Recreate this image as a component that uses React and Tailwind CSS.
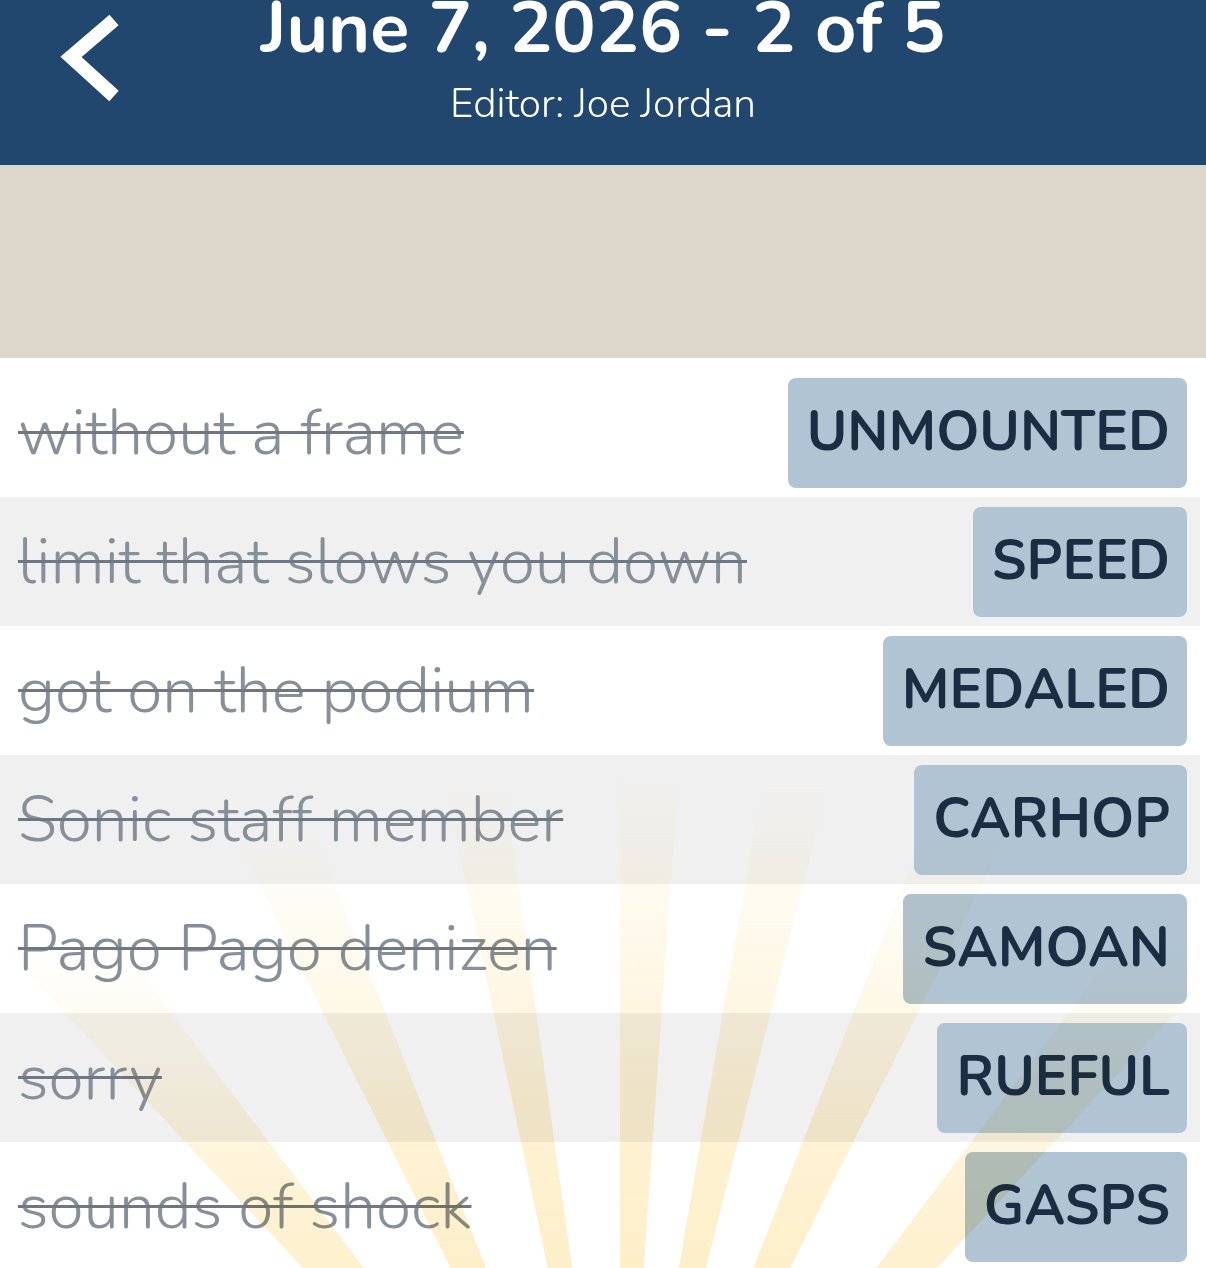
import React from "react";

const clues = [
  { clue: "without a frame", answer: "UNMOUNTED" },
  { clue: "limit that slows you down", answer: "SPEED" },
  { clue: "got on the podium", answer: "MEDALED" },
  { clue: "Sonic staff member", answer: "CARHOP" },
  { clue: "Pago Pago denizen", answer: "SAMOAN" },
  { clue: "sorry", answer: "RUEFUL" },
  { clue: "sounds of shock", answer: "GASPS" },
];

// angle from vertical (deg), half width (deg)
const rays = [
  [-40, 3],
  [-24, 2.5],
  [-10, 2],
  [2, 2],
  [12, 2.2],
  [24, 2.6],
  [40, 3],
];

function Sunburst() {
  const cx = 620;
  const cy = 1250;
  const r = 1500;
  const pt = (deg) => {
    const a = (deg * Math.PI) / 180;
    return `${cx + r * Math.sin(a)},${cy - r * Math.cos(a)}`;
  };
  return (
    <svg
      className="pointer-events-none absolute left-0 top-0 mix-blend-multiply"
      width="1200"
      height="920"
      viewBox="0 0 1200 920"
    >
      <defs>
        <linearGradient id="ray" x1="0" y1="0" x2="0" y2="1">
          <stop offset="0.44" stopColor="#fbe29a" stopOpacity="0" />
          <stop offset="0.65" stopColor="#fbdc88" stopOpacity="0.35" />
          <stop offset="1" stopColor="#fbd677" stopOpacity="0.6" />
        </linearGradient>
      </defs>
      {rays.map(([a, w], i) => (
        <polygon
          key={i}
          points={`${cx},${cy} ${pt(a - w)} ${pt(a + w)}`}
          fill="url(#ray)"
        />
      ))}
    </svg>
  );
}

export default function App() {
  return (
    <div className="min-h-screen bg-white font-['Nunito','Lato',sans-serif]">
      <header className="grid h-[165px] grid-cols-[1fr_auto_1fr] overflow-hidden bg-[#21476f] text-white">
        <div className="pl-[51px] pt-[6px]">
          <svg width="80" height="110" viewBox="0 0 80 110" fill="none">
            <path
              d="M63 14 L20 51 L63 90"
              stroke="white"
              strokeWidth="14"
              strokeLinejoin="miter"
            />
          </svg>
        </div>
        <div className="flex flex-col items-center">
          <h1 className="-mt-[8px] whitespace-nowrap text-[72px] font-bold leading-[72px]">
            June 7, 2026 - 2 of 5
          </h1>
          <p className="mt-[20px] whitespace-nowrap text-[40.5px] font-light leading-[40px]">
            Editor: Joe Jordan
          </p>
        </div>
        <div />
      </header>

      <div className="h-[193px] bg-[#ddd7cb]" />

      <div className="relative w-[1200px] pt-[10px]">
        {clues.map((c, i) => (
          <div
            key={c.answer}
            className={
              "flex h-[129px] items-center justify-between pl-[18px] pr-[13px] " +
              (i % 2 === 1 ? "bg-[#f0f0f0]" : "bg-white")
            }
          >
            <span className="whitespace-nowrap text-[64px] font-light leading-none text-[#878f98] line-through decoration-[#6d7883] decoration-[3px]">
              {c.clue}
            </span>
            <span className="flex h-[110px] items-center rounded-[8px] bg-[#b1c4d3] pl-[19px] pr-[17px] text-[55px] font-bold text-[#1b2d42]">
              {c.answer}
            </span>
          </div>
        ))}
        <Sunburst />
      </div>
    </div>
  );
}
